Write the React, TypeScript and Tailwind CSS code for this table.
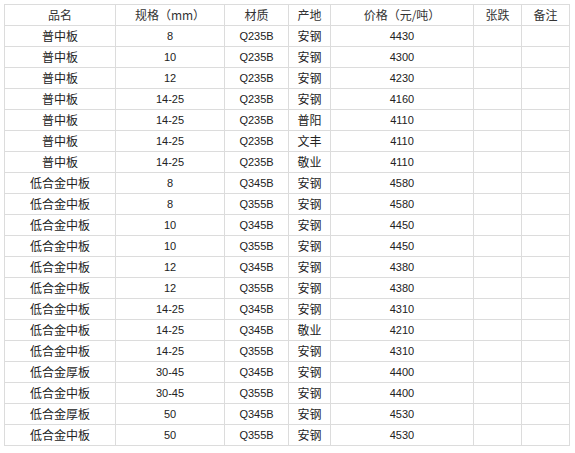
const rows: [string, string, string, string, string][] = [
  ["普中板", "8", "Q235B", "安钢", "4430"],
  ["普中板", "10", "Q235B", "安钢", "4300"],
  ["普中板", "12", "Q235B", "安钢", "4230"],
  ["普中板", "14-25", "Q235B", "安钢", "4160"],
  ["普中板", "14-25", "Q235B", "普阳", "4110"],
  ["普中板", "14-25", "Q235B", "文丰", "4110"],
  ["普中板", "14-25", "Q235B", "敬业", "4110"],
  ["低合金中板", "8", "Q345B", "安钢", "4580"],
  ["低合金中板", "8", "Q355B", "安钢", "4580"],
  ["低合金中板", "10", "Q345B", "安钢", "4450"],
  ["低合金中板", "10", "Q355B", "安钢", "4450"],
  ["低合金中板", "12", "Q345B", "安钢", "4380"],
  ["低合金中板", "12", "Q355B", "安钢", "4380"],
  ["低合金中板", "14-25", "Q345B", "安钢", "4310"],
  ["低合金中板", "14-25", "Q345B", "敬业", "4210"],
  ["低合金中板", "14-25", "Q355B", "安钢", "4310"],
  ["低合金厚板", "30-45", "Q345B", "安钢", "4400"],
  ["低合金中板", "30-45", "Q355B", "安钢", "4400"],
  ["低合金厚板", "50", "Q345B", "安钢", "4530"],
  ["低合金中板", "50", "Q355B", "安钢", "4530"],
];

const cell = "border border-[#dcdcdc] p-0 text-center align-middle h-[21px] leading-none";
const num = "font-['Liberation_Sans',sans-serif] text-[11px]";

export default function App() {
  return (
    <div className="w-[575px] h-[453px] bg-white pt-[4px] pl-[4px] font-['Noto_Sans_CJK_SC',sans-serif] text-[12px] text-[#222]">
      <table className="border-collapse table-fixed w-[565px]">
        <colgroup>
          <col className="w-[111px]" />
          <col className="w-[109px]" />
          <col className="w-[64px]" />
          <col className="w-[42px]" />
          <col className="w-[143px]" />
          <col className="w-[48px]" />
          <col className="w-[48px]" />
        </colgroup>
        <thead>
          <tr className="text-[#333]">
            <th className={`${cell} font-normal`}>品名</th>
            <th className={`${cell} font-normal`}>规格（mm）</th>
            <th className={`${cell} font-normal`}>材质</th>
            <th className={`${cell} font-normal`}>产地</th>
            <th className={`${cell} font-normal`}>价格（元/吨）</th>
            <th className={`${cell} font-normal`}>张跌</th>
            <th className={`${cell} font-normal`}>备注</th>
          </tr>
        </thead>
        <tbody>
          {rows.map((r, i) => (
            <tr key={i}>
              <td className={cell}>{r[0]}</td>
              <td className={`${cell} ${num}`}>{r[1]}</td>
              <td className={`${cell} ${num}`}>{r[2]}</td>
              <td className={cell}>{r[3]}</td>
              <td className={`${cell} ${num}`}>{r[4]}</td>
              <td className={cell}></td>
              <td className={cell}></td>
            </tr>
          ))}
        </tbody>
      </table>
    </div>
  );
}
